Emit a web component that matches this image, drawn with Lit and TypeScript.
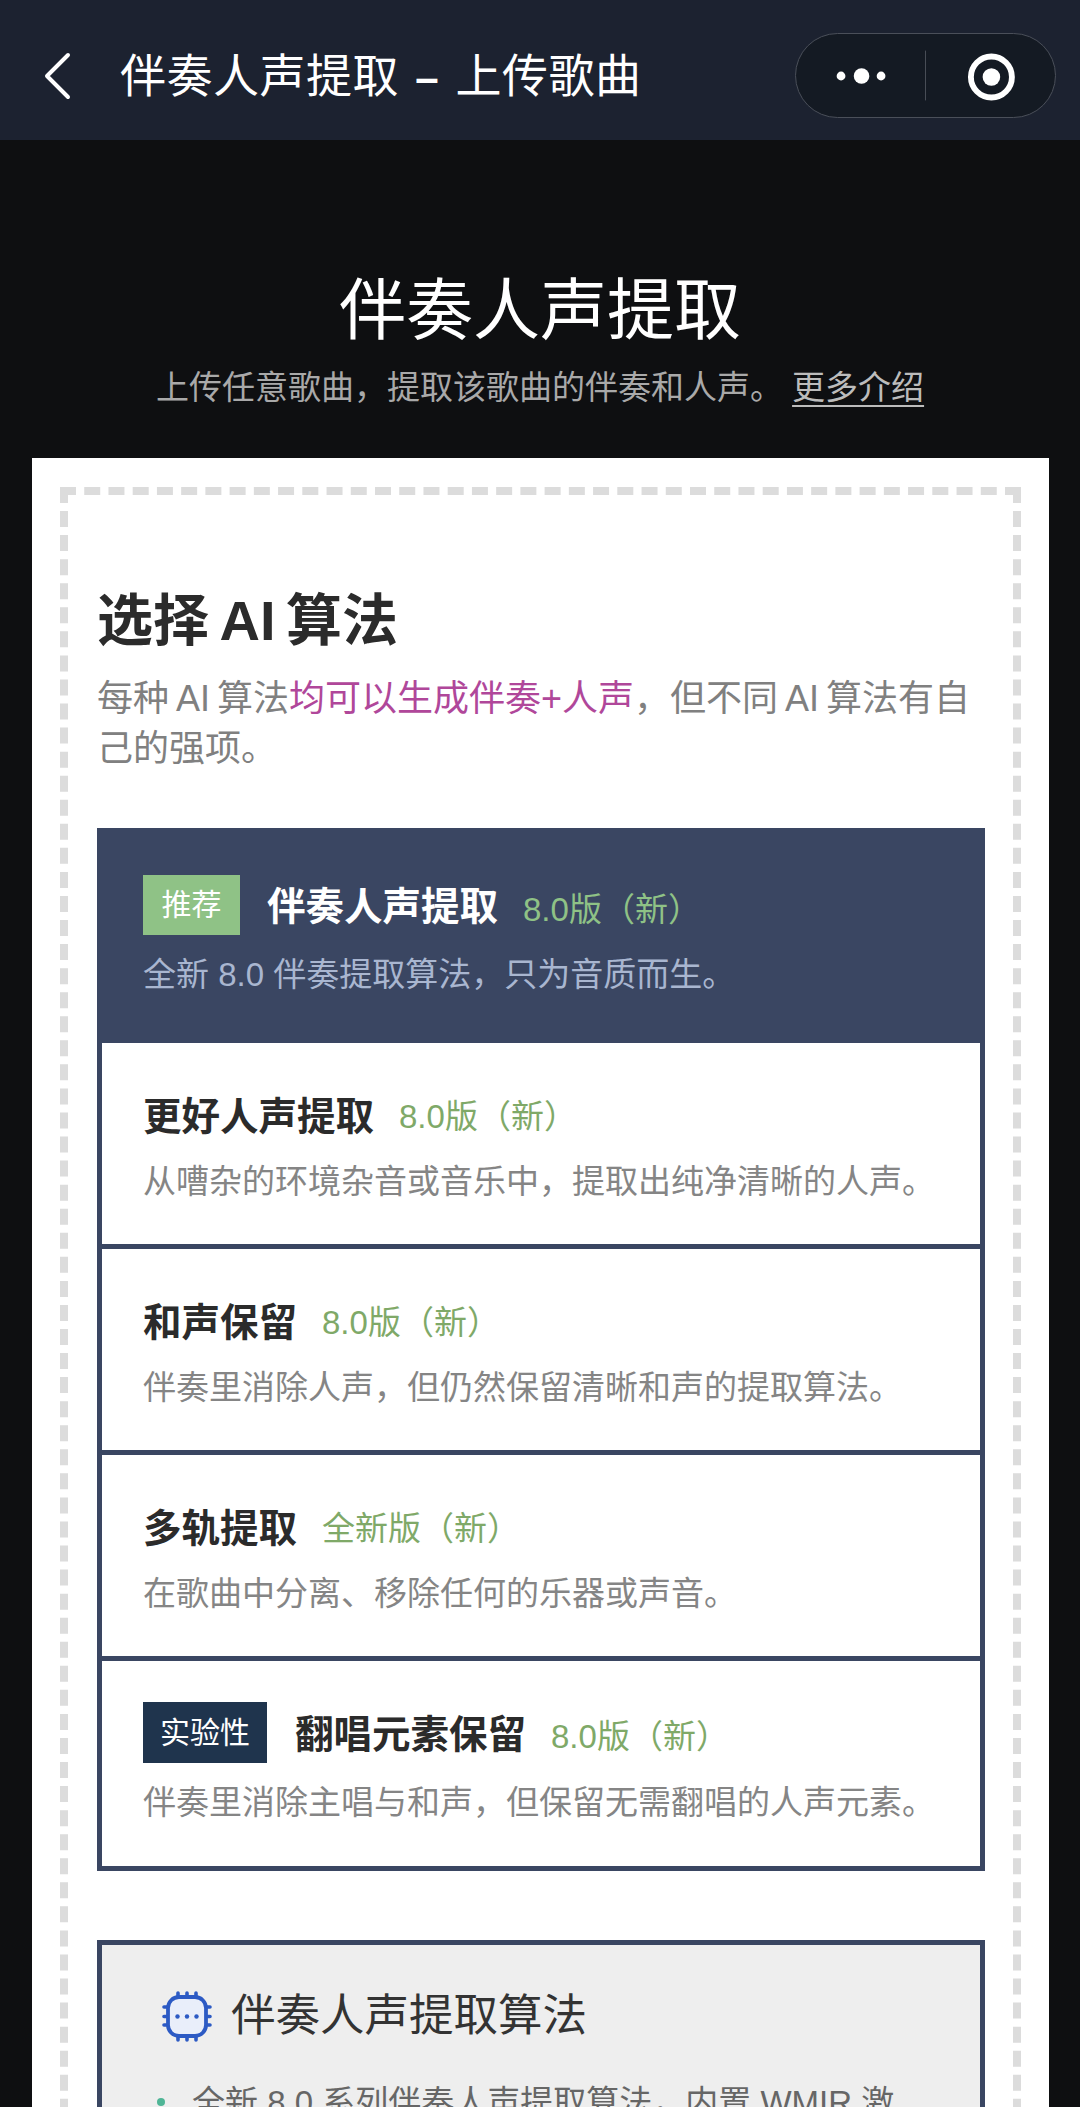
import { LitElement, html, css, svg } from "lit";
import { customElement } from "lit/decorators.js";

const ITEMS = [
  { title: "更好人声提取", ver: "8.0版（新）", desc: "从嘈杂的环境杂音或音乐中，提取出纯净清晰的人声。" },
  { title: "和声保留", ver: "8.0版（新）", desc: "伴奏里消除人声，但仍然保留清晰和声的提取算法。" },
  { title: "多轨提取", ver: "全新版（新）", desc: "在歌曲中分离、移除任何的乐器或声音。" },
  { title: "翻唱元素保留", ver: "8.0版（新）", desc: "伴奏里消除主唱与和声，但保留无需翻唱的人声元素。", tag: "实验性" },
];

const chip = svg`
  <g stroke="#2c5ac4" stroke-width="3.6" stroke-linecap="round" fill="none">
    <path d="M16 2V6M25 2V6M34 2V6M16 45V49M25 45V49M34 45V49M2 16H6M2 25.5H6M2 34H6M44 16H48M44 25.5H48M44 34H48"/>
    <rect x="6" y="6" width="38" height="39" rx="11" fill="#e9eefa" stroke-width="3.8"/>
  </g>
  <g fill="#2c5ac4"><circle cx="15.5" cy="25.5" r="2.2"/><circle cx="25" cy="25.5" r="2.2"/><circle cx="34.5" cy="25.5" r="2.2"/></g>
`;

@customElement("app-root")
export class AppRoot extends LitElement {
  static styles = css`
    :host {
      display: block;
      width: 1080px;
      height: 2107px;
      overflow: hidden;
      background: #0e0f11;
      font-family: "Liberation Sans", "Noto Sans CJK SC", sans-serif;
      color: #2b2b2b;
    }
    .nav {
      height: 140px;
      background: #1c2230;
      display: flex;
      align-items: center;
      padding: 11px 24px 0 43px;
      box-sizing: border-box;
    }
    .back { width: 28px; height: 48px; flex: none; }
    .nav-title {
      margin-left: 49px;
      padding-top: 3px;
      flex: 1;
      font-size: 46px;
      line-height: 60px;
      color: #fff;
      letter-spacing: 0.5px;
    }
    .nav-title b { font-size: 42px; font-weight: 700; margin: 0 3px; }
    .capsule {
      width: 261px;
      height: 85px;
      flex: none;
      box-sizing: border-box;
      border: 1px solid #4a4f59;
      border-radius: 43px;
      background: #141a23;
      display: block;
    }
    .hero {
      text-align: center;
      box-sizing: border-box;
      height: 318px;
      padding-top: 133px;
    }
    .hero h1 {
      margin: 0;
      font-size: 67px;
      line-height: 76px;
      font-weight: 400;
      color: #fff;
    }
    .hero p {
      margin: 14px 0 0;
      font-size: 33px;
      line-height: 50px;
      color: #a9a9a9;
    }
    .hero a { color: #bcbcbc; text-decoration: underline; text-underline-offset: 6px; text-decoration-thickness: 2px; }
    .card {
      margin: 0 31px 0 32px;
      background: #fff;
      padding: 29px 28px 0;
      height: 1700px;
      box-sizing: border-box;
    }
    .dash {
      border: 8px dashed #dcdcdc;
      padding: 86px 28px 0 29px;
      height: 1700px;
      box-sizing: border-box;
    }
    h2 {
      margin: 0;
      font-size: 56px;
      line-height: 80px;
      font-weight: 700;
      color: #2b2b2b;
      word-spacing: -5px;
    }
    .intro {
      margin: 13px 0 0;
      font-size: 36px;
      line-height: 50.4px;
      color: #808080;
      word-spacing: -3px;
    }
    .intro b { font-weight: 400; color: #b0479a; }
    .list {
      margin-top: 53px;
      border: 5px solid #3a4662;
    }
    .head {
      background: #3a4662;
      padding: 42px 41px 44px;
    }
    .item {
      padding: 50px 41px 38px;
      border-top: 5px solid #3a4662;
      background: #fff;
    }
    .head + .item { border-top: 0; }
    .item.tagged { padding: 41px 41px 39px; }
    .row {
      display: flex;
      align-items: center;
      min-height: 48px;
    }
    .tag {
      flex: none;
      height: 60px;
      line-height: 60px;
      padding: 0 18.5px;
      font-size: 30px;
      color: #fff;
      background: #8fc286;
      margin-right: 27px;
    }
    .tagged .tag { background: #1f344d; height: 61px; line-height: 61px; padding: 0 17px; margin-right: 28px; }
    .head .name, .tagged .name { padding-top: 5px; }
    .head .ver, .tagged .ver { padding-top: 10px; }
    .name {
      font-size: 38.5px;
      line-height: 48px;
      font-weight: 700;
      color: #2b2b2b;
    }
    .ver {
      margin-left: 25px;
      font-size: 33px;
      line-height: 48px;
      color: #7fa968;
    }
    .desc {
      margin-top: 17px;
      font-size: 33px;
      line-height: 48px;
      color: #858585;
    }
    .head .desc, .tagged .desc { margin-top: 16px; }
    .head .name { color: #fff; }
    .head .ver { color: #8fc286; }
    .head .desc { color: #a9b6d0; }
    .info {
      margin-top: 69px;
      border: 5px solid #3a4662;
      background: #eeeeee;
      padding: 38px 60px 60px 55px;
    }
    .info-head { display: flex; align-items: flex-start; padding-left: 5px; }
    .chip { width: 50px; height: 51px; margin-top: 8px; flex: none; }
    .info-head h3 {
      margin: 3px 0 0 19px;
      font-size: 44.5px;
      line-height: 60px;
      font-weight: 400;
      color: #333;
    }
    .bullet {
      margin-top: 32px;
      display: flex;
      gap: 27px;
      font-size: 33px;
      line-height: 50px;
      color: #666;
    }
    .dot {
      flex: none;
      width: 8px;
      height: 8px;
      margin-top: 20px;
      border-radius: 50%;
      background: #4fb596;
    }
  `;

  private renderItem(it: (typeof ITEMS)[number]) {
    return html`<div class="item ${it.tag ? "tagged" : ""}">
      <div class="row">
        ${it.tag ? html`<span class="tag">${it.tag}</span>` : null}
        <span class="name">${it.title}</span>
        <span class="ver">${it.ver}</span>
      </div>
      <div class="desc">${it.desc}</div>
    </div>`;
  }

  render() {
    return html`
      <div class="nav">
        <svg class="back" viewBox="0 0 28 48" fill="none" stroke="#fff" stroke-width="4" stroke-linecap="round" stroke-linejoin="round">
          <path d="M25 3 L4 24 L25 45" />
        </svg>
        <div class="nav-title">伴奏人声提取 <b>–</b> 上传歌曲</div>
        <svg class="capsule" viewBox="0 0 261 85">
          <rect x="130" y="17" width="1" height="51" fill="#4a4f59" />
          <g fill="#fff">
            <circle cx="44" cy="43" r="4.5" /><circle cx="65" cy="43" r="8" /><circle cx="85" cy="43" r="4.5" />
            <circle cx="198" cy="44" r="9" />
          </g>
          <circle cx="198" cy="44" r="21" fill="none" stroke="#fff" stroke-width="6" />
        </svg>
      </div>
      <div class="hero">
        <h1>伴奏人声提取</h1>
        <p>上传任意歌曲，提取该歌曲的伴奏和人声。 <a>更多介绍</a></p>
      </div>
      <div class="card">
        <div class="dash">
          <h2>选择 AI 算法</h2>
          <p class="intro">每种 AI 算法<b>均可以生成伴奏+人声</b>，但不同 AI 算法有自己的强项。</p>
          <div class="list">
            <div class="head">
              <div class="row">
                <span class="tag">推荐</span>
                <span class="name">伴奏人声提取</span>
                <span class="ver">8.0版（新）</span>
              </div>
              <div class="desc">全新 8.0 伴奏提取算法，只为音质而生。</div>
            </div>
            ${ITEMS.map((it) => this.renderItem(it))}
          </div>
          <div class="info">
            <div class="info-head">
              <svg class="chip" viewBox="0 0 50 51">${chip}</svg>
              <h3>伴奏人声提取算法</h3>
            </div>
            <div class="bullet"><span class="dot"></span><span>全新 8.0 系列伴奏人声提取算法，内置 WMIR 激活函数，音质更加出色。</span></div>
          </div>
        </div>
      </div>
    `;
  }
}
